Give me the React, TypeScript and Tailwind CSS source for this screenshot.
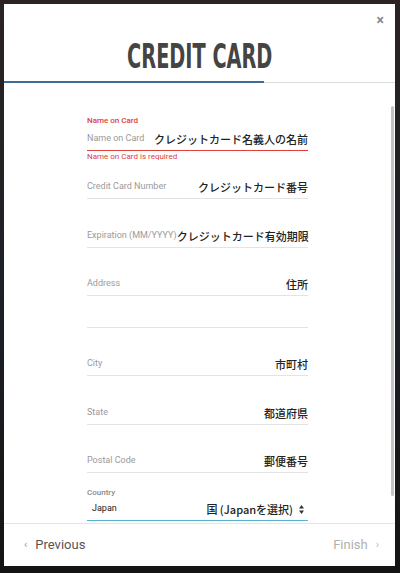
import React from 'react';

type Field = { label: string; value: string; gap: string };

const FIELDS: Field[] = [
  { label: 'Credit Card Number', value: 'クレジットカード番号', gap: 'mt-[14px]' },
  { label: 'Expiration (MM/YYYY)', value: 'クレジットカード有効期限', gap: 'mt-[26px]' },
  { label: 'Address', value: '住所', gap: 'mt-[25px]' },
  { label: '', value: '', gap: 'mt-[9px]' },
  { label: 'City', value: '市町村', gap: 'mt-[25px]' },
  { label: 'State', value: '都道府県', gap: 'mt-[26px]' },
  { label: 'Postal Code', value: '郵便番号', gap: 'mt-[25px]' },
];

const jp = "font-['Noto_Sans_CJK_JP',sans-serif]";

const TextRow = ({ label, value }: { label: string; value: string }) => (
  <div className="flex h-[23px] items-center justify-between whitespace-nowrap border-b border-[#e3e3e3]">
    <span className="shrink-0 text-[9px] text-[#9a9a9a]">{label}</span>
    <span className={`${jp} shrink-0 text-[11px] font-medium text-[#222]`}>{value}</span>
  </div>
);

const App: React.FC = () => {
  return (
    <div className="h-[573px] w-[400px] bg-gradient-to-b from-[#2a2322] via-[#1d2127] to-[#141414] pb-[7px] pl-[4px] pr-[5px] pt-[4px] font-['Roboto',sans-serif]">
      <div className="flex h-full flex-col bg-white">
        {/* Header */}
        <div className="relative flex h-[78px] items-end justify-center pb-[9px]">
          <button className="absolute right-[11px] top-[9px] text-[14px] font-bold leading-none text-[#8a8a8a]">×</button>
          <h1 className="scale-x-[0.65] whitespace-nowrap font-['Liberation_Sans_Narrow','DejaVu_Sans_Condensed',sans-serif] text-[33px] font-bold leading-none text-[#444]">
            CREDIT CARD
          </h1>
        </div>

        {/* Progress */}
        <div className="relative h-[1px] bg-[#dcdcdc]">
          <div className="absolute left-0 top-[-1px] h-[2px] w-[260px] bg-[#3e6d99]" />
        </div>

        {/* Body */}
        <div className="flex flex-1 overflow-hidden">
          <div className="flex-1 pl-[83px] pr-[83px] pt-[33px]">
            <div className="w-[221px]">
              <div className="h-[10px] text-[8px] font-medium leading-[10px] text-[#e0403a]">Name on Card</div>
              <div className="mt-[2px] flex h-[23px] items-center justify-between whitespace-nowrap border-b border-[#e0403a]">
                <span className="text-[9px] text-[#9a9a9a]">Name on Card</span>
                <span className={`${jp} text-[11px] font-medium text-[#222]`}>クレジットカード名義人の名前</span>
              </div>
              <div className="mt-[1px] h-[10px] text-[8px] leading-[10px] text-[#e0403a]">Name on Card is required</div>

              {FIELDS.map((f, i) => (
                <div key={i} className={f.gap}>
                  <TextRow label={f.label} value={f.value} />
                </div>
              ))}

              <div className="mt-[15px] h-[10px] text-[8px] font-medium leading-[10px] text-[#8a8a8a]">Country</div>
              <div className="flex h-[23px] items-center justify-between border-b border-[#5ab4cf] pl-[5px] pr-[4px]">
                <span className="text-[9px] text-[#222]">Japan</span>
                <span className={`${jp} flex items-center gap-[6px] text-[11px] font-medium text-[#222]`}>
                  国 (Japanを選択)
                  <svg width="5" height="9" viewBox="0 0 5 9" fill="#333">
                    <path d="M2.5 0L5 3.5H0z" />
                    <path d="M2.5 9L0 5.5h5z" />
                  </svg>
                </span>
              </div>
            </div>
          </div>
          {/* scrollbar */}
          <div className="mr-[1px] mt-[23px] mb-[27px] w-[3px] rounded-full bg-[#c4c4c4]" />
        </div>

        {/* Footer */}
        <div className="flex h-[43px] items-center justify-between border-t border-[#e5e5e5] pl-[20px] pr-[16px]">
          <button className="flex items-center gap-[8px] text-[13px] text-[#555]">
            <span className="text-[11px] text-[#999]">‹</span>
            Previous
          </button>
          <button className="flex items-center gap-[8px] text-[13px] text-[#b0b0b0]">
            Finish
            <span className="text-[11px] text-[#bbb]">›</span>
          </button>
        </div>
      </div>
    </div>
  );
};

export default App;
